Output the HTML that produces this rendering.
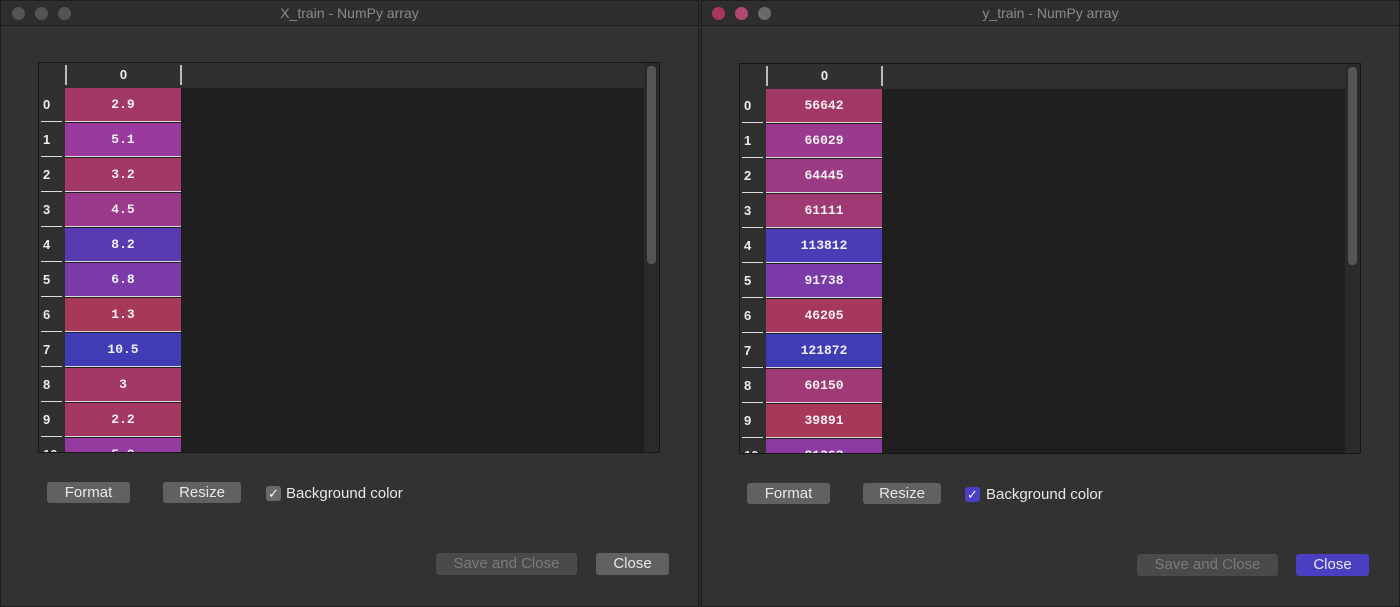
<!DOCTYPE html>
<html><head><meta charset="utf-8"><style>
*{margin:0;padding:0;box-sizing:border-box}
body{width:1400px;height:607px;background:#2b2b2b;position:relative;overflow:hidden;font-family:"Liberation Sans",sans-serif}
.win{position:absolute;top:0;height:607px;background:#323232;border:1px solid #1e1e1e}
.tb{position:absolute;left:0;right:0;top:0;height:25px;background:#2e2e2e;border-bottom:1px solid #1c1c1c;color:#8a8a8a;font-size:14px;text-align:center;line-height:25px}
.dot{position:absolute;top:6px;width:13px;height:13px;border-radius:50%;background:#555}
.tbl{position:absolute;width:622px;height:391px;background:#1f1f1f;border:1px solid #161616;overflow:hidden}
.hdr{position:absolute;left:0;top:0;right:0;height:25px;background:#303030}
.hdr span{position:absolute;left:26px;width:117px;top:0;text-align:center;color:#eee;font-size:13px;font-weight:bold;border-left:2px solid #bbb;border-right:2px solid #bbb;height:20px;margin-top:2px;line-height:20px}
.idx{position:absolute;left:0;top:25px;width:26px;bottom:0;background:#303030}
.r{position:absolute;left:0;width:142px;height:35px}
.r i{position:absolute;left:4px;top:0;line-height:33px;font-style:normal;font-weight:bold;color:#eee;font-size:13px}
.r i:after{content:"";position:absolute;left:-2px;top:33px;width:21px;height:1px;background:#ddd}
.r b{position:absolute;left:26px;width:116px;top:0;height:34px;border-bottom:1px solid #ddd;color:#f0f0f0;font-weight:bold;font-family:"Liberation Mono",monospace;font-size:13px;text-align:center;line-height:33px}
.sb{position:absolute;right:3px;top:3px;width:9px;height:198px;background:#555;border-radius:4px}
.sbt{position:absolute;right:0;top:0;width:15px;bottom:0;background:#2a2a2a}
.btn{position:absolute;height:21px;background:#616161;border-radius:3px;color:#e8e8e8;font-size:15px;text-align:center;line-height:21px}
.dis{background:#4a4a4a;color:#7a7a7a}
.cb{position:absolute;width:15px;height:15px;border-radius:3px;background:#6a6a6a;color:#fff;font-size:13px;line-height:15px;text-align:center}
.lbl{position:absolute;color:#e8e8e8;font-size:15px}
</style></head><body>

<div class="win" style="left:0;width:699px">
 <div class="tb">X_train - NumPy array</div>
 <div class="dot" style="left:11px"></div><div class="dot" style="left:34px"></div><div class="dot" style="left:57px"></div>
 <div class="tbl" style="left:37px;top:61px">
  <div class="hdr"><span>0</span></div>
  <div class="idx"></div>
  <div class="sbt"><div class="sb"></div></div>
  <div class="r" style="top:25px"><i>0</i><b style="background:#a23866">2.9</b></div>
  <div class="r" style="top:60px"><i>1</i><b style="background:#9a3a9e">5.1</b></div>
  <div class="r" style="top:95px"><i>2</i><b style="background:#a23866">3.2</b></div>
  <div class="r" style="top:130px"><i>3</i><b style="background:#9b3a8a">4.5</b></div>
  <div class="r" style="top:165px"><i>4</i><b style="background:#5a3ab0">8.2</b></div>
  <div class="r" style="top:200px"><i>5</i><b style="background:#7a3aa8">6.8</b></div>
  <div class="r" style="top:235px"><i>6</i><b style="background:#a6385a">1.3</b></div>
  <div class="r" style="top:270px"><i>7</i><b style="background:#3f3cb6">10.5</b></div>
  <div class="r" style="top:305px"><i>8</i><b style="background:#a23866">3</b></div>
  <div class="r" style="top:340px"><i>9</i><b style="background:#a43862">2.2</b></div>
  <div class="r" style="top:375px"><i>10</i><b style="background:#953a9e">5.9</b></div>
 </div>
 <div class="btn" style="left:46px;top:481px;width:83px">Format</div>
 <div class="btn" style="left:162px;top:481px;width:78px">Resize</div>
 <div class="cb" style="left:265px;top:485px">✓</div>
 <div class="lbl" style="left:285px;top:484px">Background color</div>
 <div class="btn dis" style="left:435px;top:552px;width:141px;height:22px">Save and Close</div>
 <div class="btn" style="left:595px;top:552px;width:73px;height:22px">Close</div>
</div>

<div class="win" style="left:701px;width:699px">
 <div class="tb">y_train - NumPy array</div>
 <div class="dot" style="left:10px;background:#a8365e"></div><div class="dot" style="left:33px;background:#b04870"></div><div class="dot" style="left:56px;background:#6a6a6a"></div>
 <div class="tbl" style="left:37px;top:62px">
  <div class="hdr"><span>0</span></div>
  <div class="idx"></div>
  <div class="sbt"><div class="sb"></div></div>
  <div class="r" style="top:25px"><i>0</i><b style="background:#a23866">56642</b></div>
  <div class="r" style="top:60px"><i>1</i><b style="background:#9a3a8e">66029</b></div>
  <div class="r" style="top:95px"><i>2</i><b style="background:#9c3a84">64445</b></div>
  <div class="r" style="top:130px"><i>3</i><b style="background:#a03a74">61111</b></div>
  <div class="r" style="top:165px"><i>4</i><b style="background:#4a3cb4">113812</b></div>
  <div class="r" style="top:200px"><i>5</i><b style="background:#7a3aa8">91738</b></div>
  <div class="r" style="top:235px"><i>6</i><b style="background:#a63860">46205</b></div>
  <div class="r" style="top:270px"><i>7</i><b style="background:#3f3cb6">121872</b></div>
  <div class="r" style="top:305px"><i>8</i><b style="background:#a03a74">60150</b></div>
  <div class="r" style="top:340px"><i>9</i><b style="background:#a8385a">39891</b></div>
  <div class="r" style="top:375px"><i>10</i><b style="background:#8a3aa0">81363</b></div>
 </div>
 <div class="btn" style="left:45px;top:482px;width:83px">Format</div>
 <div class="btn" style="left:161px;top:482px;width:78px">Resize</div>
 <div class="cb" style="left:263px;top:486px;background:#4a3fc8">✓</div>
 <div class="lbl" style="left:284px;top:485px">Background color</div>
 <div class="btn dis" style="left:435px;top:553px;width:141px;height:22px">Save and Close</div>
 <div class="btn" style="left:594px;top:553px;width:73px;height:22px;background:#4a3fc0">Close</div>
</div>
</body></html>
